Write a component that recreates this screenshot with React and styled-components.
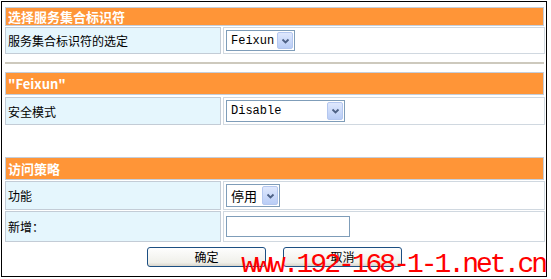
import React from 'react';
import styled, { createGlobalStyle } from 'styled-components';

const GlobalStyle = createGlobalStyle`
  body {
    margin: 0;
    background: #fff;
    font-family: "Noto Sans CJK SC", "Liberation Sans", sans-serif;
    font-size: 12px;
  }
`;

const Frame = styled.div`
  position: relative;
  box-sizing: border-box;
  width: 546px;
  height: 276px;
  margin: 1px 0 0 1px;
  border: 1px solid #000;
  padding: 5px 2px 0 3px;
`;

const Section = styled.div`
  display: flex;
  flex-direction: column;
  gap: ${p => p.gap ?? 2}px;
  margin-top: ${p => p.mt || 0}px;
`;

const Header = styled.div`
  box-sizing: border-box;
  height: ${p => p.h || 23}px;
  background: #ff9537;
  border: 1px solid #c4cedb;
  color: #fff;
  font-weight: bold;
  font-size: 13px;
  line-height: ${p => (p.h || 23) - 2}px;
  padding-left: 2px;
`;

const Row = styled.div`
  display: grid;
  grid-template-columns: 216px 322px;
  gap: 2px;
  height: ${p => p.h || 27}px;
`;

const Label = styled.div`
  box-sizing: border-box;
  background: #e5f6fd;
  border: 1px solid #c3ccd6;
  display: flex;
  align-items: center;
  padding-left: 2px;
  color: #000;
`;

const Value = styled.div`
  box-sizing: border-box;
  background: #fff;
  border: 1px solid #d0d8e0;
  display: flex;
  align-items: center;
  padding-left: 2px;
`;

const Divider = styled.div`
  margin-top: 8px;
  height: 2px;
  background: #cdc9bd;
`;

const SelectBox = styled.div`
  box-sizing: border-box;
  display: flex;
  align-items: stretch;
  width: ${p => p.w}px;
  height: ${p => p.h || 21}px;
  border: 1px solid #7f9db9;
  background: #fff;
  padding: 1px;
`;

const SelectText = styled.span`
  flex: 1;
  display: flex;
  align-items: center;
  padding-left: 3px;
  font-family: ${p => (p.cjk ? '"Noto Sans CJK SC", sans-serif' : '"Liberation Mono", monospace')};
  font-size: ${p => (p.cjk ? 13 : 12)}px;
  color: #000;
`;

const SelectButton = styled.span`
  box-sizing: border-box;
  width: 16px;
  display: flex;
  align-items: center;
  justify-content: center;
  background: linear-gradient(#dfe8fd, #b9cdf6);
  border: 1px solid #b4c7ef;
  border-radius: 2px;
`;

const TextInput = styled.input`
  box-sizing: border-box;
  width: 124px;
  height: 21px;
  border: 1px solid #7f9db9;
  margin: 0;
  padding: 0 2px;
`;

const ButtonBar = styled.div`
  display: flex;
  gap: 17px;
  padding-left: 142px;
  margin-top: 5px;
`;

const Button = styled.button`
  box-sizing: border-box;
  width: 119px;
  height: 20px;
  border: 1px solid #1c4f82;
  border-radius: 3px;
  background: linear-gradient(#fefefe, #f0f0ea 80%, #d9d6cc);
  font-family: "Noto Sans CJK SC", sans-serif;
  font-size: 12px;
  color: #000;
  padding: 0;
  line-height: 18px;
`;

const Watermark = styled.div`
  position: absolute;
  right: 1px;
  bottom: -3px;
  font-family: "Liberation Mono", monospace;
  font-size: 28px;
  line-height: 28px;
  letter-spacing: -3px;
  color: #ff0000;
  white-space: nowrap;
  pointer-events: none;
`;

const Chevron = () => (
  <svg width="9" height="6" viewBox="0 0 9 6">
    <path d="M1.5 1.5 L4.5 4.5 L7.5 1.5" fill="none" stroke="#4d6185" strokeWidth="1.8" />
  </svg>
);

const Select = ({ w, h, text, cjk }) => (
  <SelectBox w={w} h={h}>
    <SelectText cjk={cjk}>{text}</SelectText>
    <SelectButton>
      <Chevron />
    </SelectButton>
  </SelectBox>
);

export default function App() {
  return (
    <>
      <GlobalStyle />
      <Frame>
        <Section gap={1}>
          <Header h={19}>选择服务集合标识符</Header>
          <Row>
            <Label>服务集合标识符的选定</Label>
            <Value>
              <Select w={69} text="Feixun" />
            </Value>
          </Row>
        </Section>
        <Divider />
        <Section mt={8}>
          <Header>"Feixun"</Header>
          <Row h={28}>
            <Label>安全模式</Label>
            <Value>
              <Select w={119} h={22} text="Disable" />
            </Value>
          </Row>
        </Section>
        <Section mt={32} gap={1}>
          <Header>访问策略</Header>
          <Row h={29}>
            <Label>功能</Label>
            <Value>
              <Select w={54} h={23} text="停用" cjk />
            </Value>
          </Row>
          <Row h={31}>
            <Label>新增：</Label>
            <Value>
              <TextInput type="text" />
            </Value>
          </Row>
        </Section>
        <ButtonBar>
          <Button>确定</Button>
          <Button>取消</Button>
        </ButtonBar>
        <Watermark>www.192-168-1-1.net.cn</Watermark>
      </Frame>
    </>
  );
}
